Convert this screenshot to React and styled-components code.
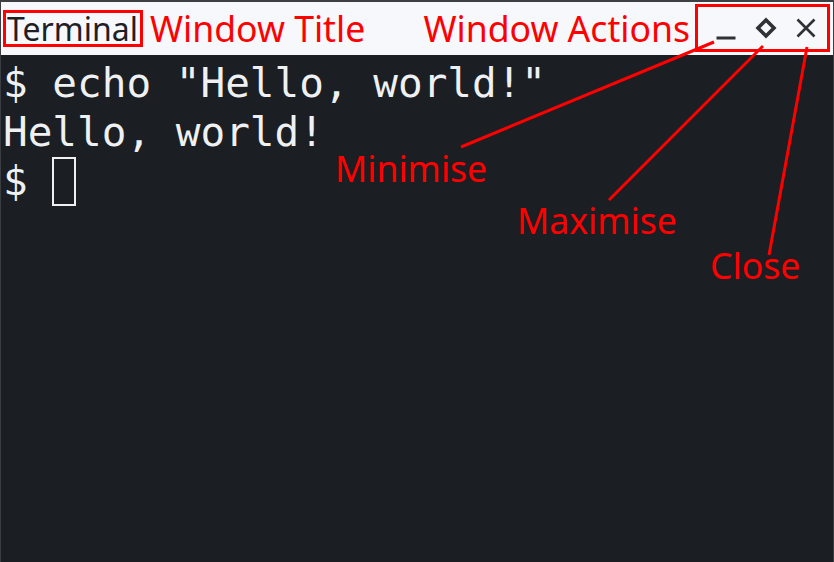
import styled, { createGlobalStyle } from 'styled-components';

const GlobalStyle = createGlobalStyle`
  html, body {
    margin: 0;
    padding: 0;
    background: #1b1e23;
  }
  * {
    box-sizing: border-box;
  }
`;

const ANNOTATION_RED = '#ff0000';

const StyledWindow = styled.div`
  position: relative;
  display: flex;
  flex-direction: column;
  width: 834px;
  height: 562px;
  overflow: hidden;
  background-color: #1b1e23;
  border-top: 2px solid #3c3f44;
  border-left: 1px solid #3a3d42;
  border-right: 1px solid #3a3d42;
`;

const StyledTitleBar = styled.header`
  display: flex;
  align-items: center;
  height: 53px;
  padding: 0 3px 0 2px;
  background-color: #f6f8fc;
  font-family: 'Noto Sans', 'Open Sans', sans-serif;
`;

const StyledTitle = styled.h1`
  margin: 0;
  height: 37px;
  padding: 0 2px 0 1px;
  display: flex;
  align-items: center;
  border: 3px solid ${ANNOTATION_RED};
  font-size: 32px;
  font-weight: 400;
  line-height: 1;
  color: #1e2024;
`;

const StyledLabel = styled.span`
  font-size: 35.6px;
  line-height: 1;
  color: ${ANNOTATION_RED};
  margin-left: ${({ $gap }) => $gap || 0}px;
  margin-right: ${({ $after }) => $after || 0}px;
  white-space: nowrap;
`;

const StyledSpacer = styled.div`
  flex: 1;
`;

const StyledActions = styled.div`
  display: flex;
  align-items: center;
  width: 135px;
  height: 48px;
  margin-top: -2px;
  padding: 0 1px 0 8px;
  border: 3px solid ${ANNOTATION_RED};
`;

const StyledActionButton = styled.button`
  display: grid;
  place-items: center;
  width: 40px;
  height: 40px;
  padding: 0;
  border: 0;
  background: none;
  color: #2f3135;
  cursor: pointer;
`;

const StyledScreen = styled.main`
  flex: 1;
  padding: 4px 0 0 2px;
  font-family: 'DejaVu Sans Mono', 'Liberation Mono', monospace;
  font-size: 41px;
  line-height: 49px;
  color: #eef0f2;
  white-space: pre;
`;

const StyledLine = styled.div`
  height: 49px;
`;

const StyledCursor = styled.span`
  display: inline-block;
  width: 24px;
  height: 49px;
  vertical-align: top;
  border: 2px solid #eef0f2;
`;

const StyledOverlay = styled.svg`
  position: absolute;
  inset: 0;
  pointer-events: none;
`;

const StyledCallout = styled.span`
  position: absolute;
  left: ${({ $x }) => $x}px;
  top: ${({ $y }) => $y}px;
  font-family: 'Noto Sans', 'Open Sans', sans-serif;
  font-size: 35.6px;
  line-height: 1;
  color: ${ANNOTATION_RED};
  white-space: nowrap;
`;

const callouts = [
  { label: 'Minimise', x: 334, y: 149, from: [460, 145], to: [713, 40] },
  { label: 'Maximise', x: 516, y: 201, from: [608, 198], to: [762, 44] },
  { label: 'Close', x: 709, y: 246, from: [768, 253], to: [806, 45] },
];

function MinimiseIcon() {
  return (
    <svg width="24" height="24" viewBox="0 0 24 24">
      <rect x="2.5" y="20.5" width="19" height="3" fill="currentColor" />
    </svg>
  );
}

function MaximiseIcon() {
  return (
    <svg width="24" height="24" viewBox="0 0 24 24">
      <polygon points="12,4 20,12 12,20 4,12" fill="none" stroke="currentColor" strokeWidth="3.6" />
    </svg>
  );
}

function CloseIcon() {
  return (
    <svg width="24" height="24" viewBox="0 0 24 24">
      <path d="M3.5 3.5 L20.5 20.5 M20.5 3.5 L3.5 20.5" stroke="currentColor" strokeWidth="2.6" fill="none" />
    </svg>
  );
}

function App() {
  return (
    <>
      <GlobalStyle />
      <StyledWindow>
        <StyledTitleBar>
          <StyledTitle>Terminal</StyledTitle>
          <StyledLabel $gap={7}>Window Title</StyledLabel>
          <StyledSpacer />
          <StyledLabel $after={5}>Window Actions</StyledLabel>
          <StyledActions>
            <StyledActionButton aria-label="Minimise">
              <MinimiseIcon />
            </StyledActionButton>
            <StyledActionButton aria-label="Maximise">
              <MaximiseIcon />
            </StyledActionButton>
            <StyledActionButton aria-label="Close">
              <CloseIcon />
            </StyledActionButton>
          </StyledActions>
        </StyledTitleBar>

        <StyledScreen>
          <StyledLine>$ echo "Hello, world!"</StyledLine>
          <StyledLine>Hello, world!</StyledLine>
          <StyledLine>
            $ <StyledCursor />
          </StyledLine>
        </StyledScreen>

        <StyledOverlay width="834" height="562" viewBox="0 0 834 562">
          {callouts.map(({ label, from, to }) => (
            <line
              key={label}
              x1={from[0]}
              y1={from[1]}
              x2={to[0]}
              y2={to[1]}
              stroke={ANNOTATION_RED}
              strokeWidth="3"
            />
          ))}
        </StyledOverlay>
        {callouts.map(({ label, x, y }) => (
          <StyledCallout key={label} $x={x} $y={y}>
            {label}
          </StyledCallout>
        ))}
      </StyledWindow>
    </>
  );
}

export default App;
